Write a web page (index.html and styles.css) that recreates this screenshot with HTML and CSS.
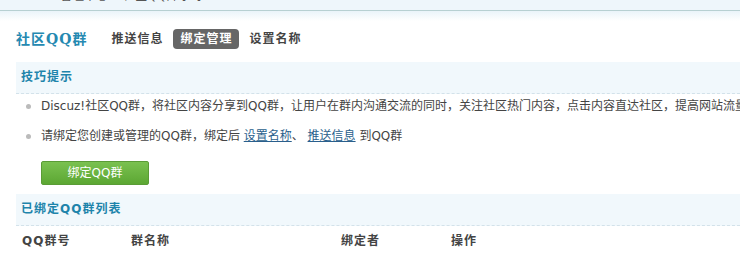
FILE: index.html
```html
<!DOCTYPE html>
<html lang="zh-CN">
<head>
<meta charset="utf-8">
<title>社区QQ群</title>
<link rel="stylesheet" href="styles.css">
</head>
<body>
<div class="topbar"><div class="crumb">管理中心 &raquo; 社区QQ群 [+]</div></div>
<div class="head">
  <h3 class="title">社区QQ群</h3>
  <ul class="nav">
    <li class="nav-item">推送信息</li>
    <li class="nav-item active">绑定管理</li>
    <li class="nav-item">设置名称</li>
  </ul>
</div>
<div class="sect-hd">技巧提示</div>
<ul class="tips">
  <li class="tip"><span class="dot"></span><span>Discuz!社区QQ群，将社区内容分享到QQ群，让用户在群内沟通交流的同时，关注社区热门内容，点击内容直达社区，提高网站流量</span></li>
  <li class="tip"><span class="dot"></span><span>请绑定您创建或管理的QQ群，绑定后 <a class="lnk" href="#">设置名称</a>、 <a class="lnk" href="#">推送信息</a> 到QQ群</span></li>
</ul>
<div class="btn-row"><button class="btn" type="button">绑定QQ群</button></div>
<div class="sect-hd sect-hd2">已绑定QQ群列表</div>
<div class="thead">
  <div class="th c1">QQ群号</div>
  <div class="th c2">群名称</div>
  <div class="th c3">绑定者</div>
  <div class="th c4">操作</div>
</div>
</body>
</html>
```
FILE: styles.css
```css
html, body {
  margin: 0;
  padding: 0;
  background: #fff;
  overflow: hidden;
}
body {
  font-family: "DejaVu Sans", "Noto Sans CJK SC", sans-serif;
  font-size: 12px;
  color: #444;
  white-space: nowrap;
}
.topbar {
  height: 10px;
  overflow: hidden;
  background: #eef6fb;
  border-bottom: 1px solid #b7d0d2;
}
.crumb {
  margin-top: -11px;
  padding-left: 60px;
  line-height: 14px;
  color: #555;
  font-size: 12px;
}
.head {
  display: flex;
  align-items: center;
  padding: 18px 0 13px 16px;
  background: linear-gradient(#eaf4fa, #fff 10px);
}
.title {
  margin: 0;
  font-size: 14px;
  line-height: 20px;
  font-weight: bold;
  color: #2589b1;
  letter-spacing: 1px;
  font-family: "DejaVu Serif", "Noto Sans CJK SC", serif;
}
.nav {
  display: flex;
  gap: 3px;
  margin: 0 0 0 17px;
  padding: 0;
  list-style: none;
}
.nav-item {
  padding: 0 7px;
  height: 20px;
  line-height: 20px;
  font-weight: bold;
  color: #444;
  letter-spacing: 1px;
  border-radius: 4px;
}
.nav-item.active {
  background: #666;
  color: #fff;
}
.sect-hd {
  margin-left: 16px;
  height: 31px;
  line-height: 31px;
  padding-left: 5px;
  background: #f1f8fc;
  border-bottom: 1px dashed #d3e2ea;
  font-weight: bold;
  color: #1e84ab;
  letter-spacing: 1px;
}
.tips {
  margin: 0;
  padding: 0;
  list-style: none;
}
.tip {
  display: flex;
  align-items: center;
  gap: 10px;
  padding-left: 26px;
  height: 24px;
  line-height: 24px;
  margin-bottom: 6px;
}
.dot {
  width: 5px;
  height: 5px;
  border-radius: 50%;
  background: #bbb;
  flex: none;
}
.lnk {
  color: #2a5f8c;
  text-decoration: underline;
}
.btn-row {
  padding: 7px 0 0 41px;
}
.btn {
  width: 108px;
  height: 24px;
  padding: 0;
  border: 1px solid #5a9c36;
  border-radius: 2px;
  background: linear-gradient(#7ac150, #5ca733);
  color: #fff;
  font-family: "DejaVu Sans", "Noto Sans CJK SC", sans-serif;
  font-size: 12px;
  line-height: 22px;
  cursor: pointer;
}
.sect-hd2 {
  margin-top: 9px;
}
.thead {
  display: flex;
  margin-left: 16px;
  height: 30px;
  line-height: 30px;
}
.th {
  padding-left: 6px;
  font-weight: bold;
  color: #444;
  letter-spacing: 1px;
  box-sizing: border-box;
}
.c1 { width: 109px; }
.c2 { width: 210px; }
.c3 { width: 110px; }
.c4 { width: 110px; }
```
